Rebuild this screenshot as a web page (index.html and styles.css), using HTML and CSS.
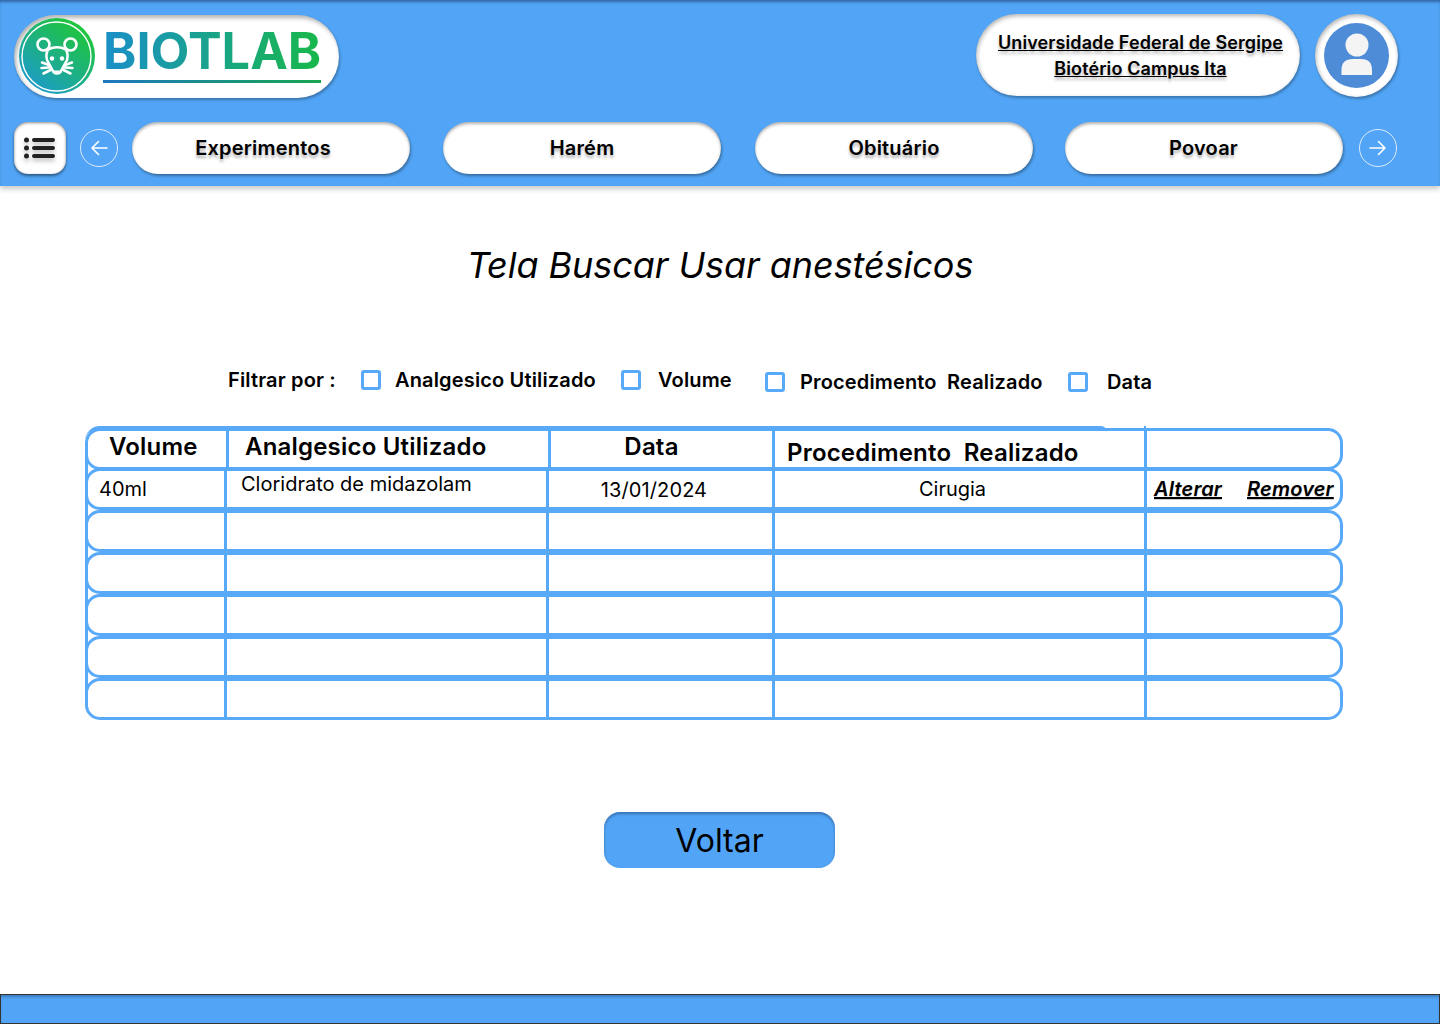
FILE: index.html
```html
<!DOCTYPE html>
<html lang="pt-BR">
<head>
  <meta charset="UTF-8">
  <title>BIOTLAB - Buscar Usar anestésicos</title>
  <link rel="stylesheet" href="styles.css">
</head>
<body>

  <header class="topo">
    <div class="topo-linha">
      <div class="logo">
        <svg class="logo-marca" viewBox="0 0 76 76" aria-hidden="true">
          <defs>
            <linearGradient id="grad-logo" x1="0.1" y1="1" x2="0.8" y2="0.1">
              <stop offset="0" stop-color="#1b96d8"/>
              <stop offset="1" stop-color="#1fc63a"/>
            </linearGradient>
          </defs>
          <circle cx="38" cy="38" r="38" fill="url(#grad-logo)"/>
          <circle cx="37.5" cy="38.5" r="34.5" fill="none" stroke="#fff" stroke-width="1.4"/>
          <g fill="none" stroke="#fff" stroke-width="2.6" stroke-linecap="round" stroke-linejoin="round">
            <circle cx="24.5" cy="26.5" r="6"/>
            <circle cx="51.5" cy="26.5" r="6"/>
            <path d="M29 31.5 Q38 27 47 31.5 Q49.5 36 48 42 L41.5 54 Q38 57 34.5 54 L28 42 Q26.500 36 29 31.500Z"/>
            <path d="M30 47 L23 44.500 M30 49.500 L22.500 50 M31.500 52 L24.500 55.500 M46 47 L53 44.500 M46 49.500 L53.500 50 M44.500 52 L51.500 55.500"/>
          </g>
          <circle cx="33" cy="40.500" r="2.200" fill="#fff"/>
          <circle cx="43" cy="40.500" r="2.200" fill="#fff"/>
          <path d="M34.500 52.500 h7 l-3.500 3.500z" fill="#fff"/>
        </svg>
        <div class="logo-nome">
          <span class="logo-texto">BIOTLAB</span>
          <span class="logo-barra"></span>
        </div>
      </div>

      <div class="instituicao">
        <a href="#">Universidade Federal de Sergipe</a>
        <a href="#">Biotério Campus Ita</a>
      </div>

      <div class="avatar">
        <svg viewBox="0 0 65 65" aria-hidden="true">
          <circle cx="32.500" cy="32.500" r="32.500" fill="#4e8cd8"/>
          <circle cx="33" cy="22" r="11.500" fill="#f4f4f4"/>
          <path d="M17.500 52 V47 Q17.500 36 29 36 H37 Q48 36 48 47 V52Z" fill="#f4f4f4"/>
        </svg>
      </div>
    </div>

    <nav class="menu">
      <button class="btn-lista" type="button" aria-label="Menu">
        <svg viewBox="0 0 32 22" aria-hidden="true">
          <g fill="#222">
            <circle cx="2.500" cy="3" r="2.500"/>
            <circle cx="2.500" cy="11" r="2.500"/>
            <circle cx="2.500" cy="19" r="2.500"/>
            <rect x="8" y="1" width="23" height="4" rx="2"/>
            <rect x="8" y="9" width="23" height="4" rx="2"/>
            <rect x="8" y="17" width="23" height="4" rx="2"/>
          </g>
        </svg>
      </button>
      <button class="seta seta-esq" type="button" aria-label="Anterior">
        <svg viewBox="0 0 18 16" aria-hidden="true"><path d="M17 8H2M8.500 1.500 2 8l6.500 6.500"/></svg>
      </button>
      <a class="item item-1" href="#">Experimentos</a>
      <a class="item item-2" href="#">Harém</a>
      <a class="item item-3" href="#">Obituário</a>
      <a class="item item-4" href="#">Povoar</a>
      <button class="seta seta-dir" type="button" aria-label="Próximo">
        <svg viewBox="0 0 18 16" aria-hidden="true"><path d="M1 8h15M9.500 1.500 16 8l-6.500 6.500"/></svg>
      </button>
    </nav>
  </header>

  <main class="conteudo">
    <h1 class="titulo">Tela Buscar Usar anestésicos</h1>

    <form class="filtros">
      <span class="filtros-rotulo">Filtrar por :</span>
      <label class="filtro f-analgesico"><span class="caixa"></span>Analgesico Utilizado</label>
      <label class="filtro f-volume"><span class="caixa"></span>Volume</label>
      <label class="filtro f-procedimento"><span class="caixa"></span>Procedimento&nbsp; Realizado</label>
      <label class="filtro f-data"><span class="caixa"></span>Data</label>
    </form>

    <div class="tabela">
      <div class="linha cabecalho">
        <div class="cel c-volume">Volume</div>
        <div class="cel c-analgesico">Analgesico Utilizado</div>
        <div class="cel c-data">Data</div>
        <div class="cel c-proc">Procedimento&nbsp; Realizado</div>
        <div class="cel"></div>
      </div>
      <div class="linha dados">
        <div class="cel d-volume">40ml</div>
        <div class="cel d-analgesico">Cloridrato de midazolam</div>
        <div class="cel d-data">13/01/2024</div>
        <div class="cel d-proc">Cirugia</div>
        <div class="cel acoes"><a href="#">Alterar</a><a href="#">Remover</a></div>
      </div>
      <div class="linha"><div class="cel"></div><div class="cel"></div><div class="cel"></div><div class="cel"></div><div class="cel"></div></div>
      <div class="linha"><div class="cel"></div><div class="cel"></div><div class="cel"></div><div class="cel"></div><div class="cel"></div></div>
      <div class="linha"><div class="cel"></div><div class="cel"></div><div class="cel"></div><div class="cel"></div><div class="cel"></div></div>
      <div class="linha"><div class="cel"></div><div class="cel"></div><div class="cel"></div><div class="cel"></div><div class="cel"></div></div>
      <div class="linha"><div class="cel"></div><div class="cel"></div><div class="cel"></div><div class="cel"></div><div class="cel"></div></div>
    </div>

    <button class="voltar" type="button">Voltar</button>
  </main>

  <footer class="rodape"></footer>

</body>
</html>
```

FILE: styles.css
```css
* {
  box-sizing: border-box;
}

body {
  margin: 0;
  height: 1024px;
  display: flex;
  flex-direction: column;
  background-color: #fff;
  font-family: Inter, "Noto Sans", sans-serif;
  color: #000;
  overflow: hidden;
}

a {
  color: inherit;
}

/* topo azul */
.topo {
  height: 186px;
  padding-top: 14px;
  background-color: #52a5f6;
  box-shadow: inset 0 3px 3px -1px rgba(30, 60, 110, 0.6), 0 3px 5px rgba(0, 0, 0, 0.22);
  flex-shrink: 0;
}

.topo-linha {
  display: flex;
  align-items: flex-start;
  padding: 0 42px 0 14px;
}

.logo {
  width: 325px;
  height: 83px;
  margin-top: 1px;
  padding: 3px 0 0 5px;
  display: flex;
  background-color: #fff;
  border-radius: 42px;
  box-shadow: inset 2px 3px 4px rgba(0, 0, 0, 0.3), 1px 2px 3px rgba(0, 0, 0, 0.3);
}

.logo-marca {
  width: 76px;
  height: 76px;
  flex-shrink: 0;
}

.logo-nome {
  margin-left: 8px;
  width: 218px;
  display: flex;
  flex-direction: column;
}

.logo-texto {
  font-size: 50.5px;
  font-weight: 700;
  line-height: 62px;
  height: 60px;
  margin-top: 2px;
  text-align: center;
  background: linear-gradient(90deg, #1a8fc9, #18b84a);
  -webkit-background-clip: text;
  background-clip: text;
  color: transparent;
}

.logo-barra {
  height: 3px;
  background: linear-gradient(90deg, #1f78c0, #17a651);
}

.instituicao {
  width: 324px;
  height: 82px;
  margin-left: auto;
  padding-left: 5px;
  display: flex;
  flex-direction: column;
  align-items: center;
  justify-content: center;
  gap: 3px;
  background-color: #fff;
  border-radius: 41px;
  box-shadow: inset 1px 2px 4px rgba(0, 0, 0, 0.3), 1px 2px 3px rgba(0, 0, 0, 0.3);
  font-size: 18px;
  font-weight: 600;
  letter-spacing: 0.1px;
  line-height: 23px;
  text-shadow: 0 3px 3px rgba(0, 0, 0, 0.3);
}

.avatar {
  width: 83px;
  height: 83px;
  margin-left: 15px;
  padding: 9px;
  background-color: #fff;
  border-radius: 50%;
  box-shadow: inset 1px 2px 4px rgba(0, 0, 0, 0.3), 1px 2px 3px rgba(0, 0, 0, 0.3);
}

.avatar svg {
  display: block;
  width: 65px;
  height: 65px;
}

/* menu */
.menu {
  margin-top: 24px;
  padding-left: 14px;
  display: flex;
  align-items: center;
}

.btn-lista {
  width: 52px;
  height: 52px;
  padding: 0;
  border: none;
  background-color: #fff;
  border-radius: 14px;
  box-shadow: inset 0 1px 3px rgba(0, 0, 0, 0.45), 0 2px 3px rgba(0, 0, 0, 0.45);
  display: flex;
  align-items: center;
  justify-content: center;
}

.btn-lista svg {
  width: 32px;
  height: 22px;
  filter: drop-shadow(0 3px 2px rgba(0, 0, 0, 0.25));
}

.seta {
  width: 38px;
  height: 38px;
  padding: 0;
  border: 1px solid #dcebfb;
  border-radius: 50%;
  background: transparent;
  display: flex;
  align-items: center;
  justify-content: center;
}

.seta svg {
  width: 18px;
  height: 16px;
  fill: none;
  stroke: #fff;
  stroke-width: 1.6;
  stroke-linecap: round;
  stroke-linejoin: round;
}

.seta-esq {
  margin-left: 14px;
}

.seta-dir {
  margin-left: 16px;
}

.item {
  width: 278px;
  height: 52px;
  display: flex;
  align-items: center;
  justify-content: center;
  background-color: #fff;
  border-radius: 26px;
  box-shadow: inset 0 2px 3px rgba(0, 0, 0, 0.3), 1px 2px 3px rgba(0, 0, 0, 0.35);
  font-size: 20px;
  font-weight: 600;
  letter-spacing: 0.2px;
  text-decoration: none;
  text-shadow: 0 3px 3px rgba(0, 0, 0, 0.3);
}

.item-1 {
  margin-left: 14px;
  padding-right: 16px;
}

.item-2 {
  margin-left: 33px;
}

.item-3 {
  margin-left: 34px;
}

.item-4 {
  margin-left: 32px;
  padding-right: 1px;
}

/* conteudo */
.conteudo {
  flex: 1;
  display: flex;
  flex-direction: column;
}

.titulo {
  margin: 56px 0 0;
  font-size: 36px;
  font-weight: 400;
  font-style: italic;
  letter-spacing: -0.05px;
  line-height: 46px;
  text-align: center;
}

.filtros {
  margin-top: 77px;
  height: 30px;
  padding-left: 228px;
  display: flex;
  align-items: center;
  font-size: 20px;
  font-weight: 600;
  letter-spacing: 0.15px;
}

.filtros-rotulo {
  width: 133px;
}

.filtro {
  display: flex;
  align-items: center;
}

.caixa {
  width: 20px;
  height: 20px;
  background-color: #fff;
  border: 3px solid #58a9f8;
  border-radius: 3px;
  flex-shrink: 0;
}

.f-analgesico .caixa {
  margin-right: 14px;
}

.f-analgesico {
  width: 260px;
}

.f-volume .caixa {
  margin-right: 17px;
}

.f-volume {
  width: 144px;
}

.f-procedimento .caixa {
  margin-right: 15px;
}

.f-procedimento {
  width: 303px;
  margin-top: 4px;
}

.f-data .caixa {
  margin-right: 19px;
}

.f-data {
  margin-top: 4px;
}

/* tabela */
.tabela {
  margin: 33px 97px 0 85px;
  position: relative;
  background: linear-gradient(#58a9f8, #58a9f8) left center / 3px calc(100% - 30px) no-repeat;
}

.linha {
  height: 42px;
  display: grid;
  grid-template-columns: 139px 322px 226px 372px 1fr;
  border: 3px solid #58a9f8;
  border-radius: 15px;
}

.cel {
  border-right: 3px solid #58a9f8;
  display: flex;
  align-items: center;
  font-size: 20px;
  white-space: nowrap;
}

.cel:last-child {
  border-right: none;
}

.cabecalho {
  margin-bottom: -2px;
  grid-template-columns: 141px 322px 224px 372px 1fr;
  font-weight: 600;
}

/* linha mais grossa no topo do cabecalho */
.cabecalho::before {
  content: "";
  position: absolute;
  left: 0;
  top: -2px;
  width: 1022px;
  height: 18px;
  border-top: 3px solid #58a9f8;
  border-top-left-radius: 15px;
  border-top-right-radius: 6px;
}

/* a coluna das acoes sobe um pouco acima da borda */
.cabecalho::after {
  content: "";
  position: absolute;
  left: 1059px;
  top: -2px;
  width: 2px;
  height: 4px;
  background-color: #58a9f8;
}

.cabecalho .cel {
  font-size: 24px;
  font-weight: 600;
  letter-spacing: 0.2px;
  padding-bottom: 5px;
}

.cabecalho .c-volume {
  padding-left: 21px;
}

.cabecalho .c-analgesico {
  padding-left: 16px;
}

.cabecalho .c-data {
  justify-content: center;
  padding-right: 20px;
}

.cabecalho .c-proc {
  padding: 7px 0 0 12px;
}

.d-volume {
  padding-left: 11px;
}

.d-analgesico {
  padding: 0 0 11px 14px;
}

.d-data {
  justify-content: center;
  padding: 2px 13px 0 0;
  letter-spacing: 0.1px;
}

.d-proc {
  justify-content: center;
  padding-right: 14px;
}

.acoes {
  padding-left: 7px;
  font-weight: 600;
  font-style: italic;
  letter-spacing: 0.2px;
  gap: 25px;
  text-shadow: 0 1px 1px rgba(0, 0, 0, 0.2);
}

.voltar {
  width: 231px;
  height: 56px;
  margin: 92px 0 0 604px;
  padding: 0;
  border: none;
  background-color: #52a5f6;
  border-radius: 16px;
  box-shadow: inset 0 2px 3px rgba(30, 60, 110, 0.5);
  font-family: Inter, "Noto Sans", sans-serif;
  font-size: 32px;
  color: #000;
}

/* rodape */
.rodape {
  height: 30px;
  flex-shrink: 0;
  background-color: #52a5f6;
  border: 1px solid #333;
  box-shadow: inset 0 3px 3px -1px rgba(30, 60, 110, 0.4);
}
```
